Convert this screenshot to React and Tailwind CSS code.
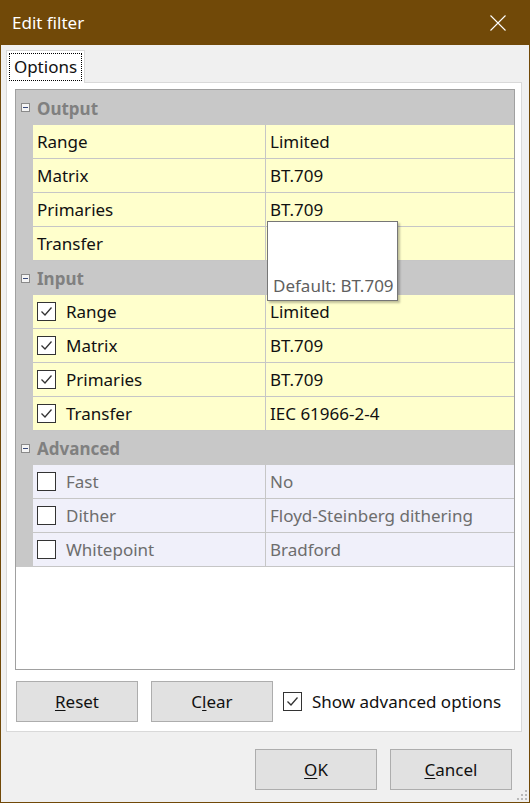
import React from 'react';

const font = "font-['Noto_Sans',_'Liberation_Sans',_sans-serif]";

function Check({ checked }) {
  return (
    <div className="w-[19px] h-[19px] border border-[#333333] bg-white flex items-center justify-center shrink-0">
      {checked ? (
        <svg width="15" height="15" viewBox="0 0 15 15">
          <path d="M2.5 7.5 L6 11 L12.5 3.5" fill="none" stroke="#333333" strokeWidth="1.3" />
        </svg>
      ) : null}
    </div>
  );
}

function Minus() {
  return (
    <svg width="9" height="9" viewBox="0 0 9 9" className="shrink-0">
      <rect x="0.5" y="0.5" width="8" height="8" fill="#f4f4f4" stroke="#8a8a8a" />
      <path d="M2 4.5 H7" stroke="#3a4a7a" strokeWidth="1" />
    </svg>
  );
}

function Header({ title, first }) {
  return (
    <div className={`${first ? 'h-[35px]' : 'h-[34px]'} bg-[#c8c8c8] flex items-center`}>
      <div className="w-[17px] flex justify-center pl-[2px]">
        <Minus />
      </div>
      <span className="ml-[4px] text-[17px] font-bold text-[#808080] leading-none pt-[1px]">{title}</span>
    </div>
  );
}

function Row({ name, value, check, disabled }) {
  const bg = disabled ? 'bg-[#f0f0fa]' : 'bg-[#ffffcc]';
  const color = disabled ? 'text-[#6d6d6d]' : 'text-[#111111]';
  return (
    <div className="h-[34px] flex">
      <div className="w-[17px] bg-[#c8c8c8]" />
      <div className={`w-[233px] ${bg} ${color} border-b border-r border-[#c6c6c6] flex items-center pl-[4px]`}>
        {check !== undefined ? (
          <>
            <Check checked={check} />
            <span className="ml-[10px]">{name}</span>
          </>
        ) : (
          <span>{name}</span>
        )}
      </div>
      <div className={`flex-1 ${bg} ${color} border-b border-[#c6c6c6] flex items-center pl-[4px]`}>
        {value}
      </div>
    </div>
  );
}

function Button({ children, className = '' }) {
  return (
    <div className={`w-[122px] h-[41px] bg-[#e1e1e1] border border-[#adadad] flex items-center justify-center text-[17px] text-[#111111] ${className}`}>
      {children}
    </div>
  );
}

export default function App() {
  return (
    <div className={`relative w-[530px] h-[803px] border border-[#714908] bg-[#f0f0f0] flex flex-col ${font} text-[17px]`}>
      {/* title bar */}
      <div className="h-[44px] bg-[#714908] flex items-center justify-between pl-[11px] pr-[23px] shrink-0">
        <span className="text-white text-[17px]">Edit filter</span>
        <svg width="16" height="16" viewBox="0 0 16 16">
          <path d="M0.5 0.5 L15.5 15.5 M15.5 0.5 L0.5 15.5" stroke="white" strokeWidth="1.1" />
        </svg>
      </div>

      <div className="flex-1 flex flex-col pl-[5px] pr-[7px] pt-[5px]">
        {/* tab strip */}
        <div className="flex">
          <div className="relative z-10 h-[33px] -mb-px w-[79px] bg-white border border-b-0 border-[#d9d9d9] p-[2px]">
            <div className="h-[28px] border border-dotted border-black flex items-center justify-center text-[17px] text-[#111111]">
              Options
            </div>
          </div>
        </div>

        {/* tab panel */}
        <div className="h-[650px] bg-white border border-[#d9d9d9] flex flex-col">
          <div className="ml-[8px] mr-[6px] mt-[6px] h-[581px] border border-[#a0a0a0] bg-white flex flex-col">
            <Header title="Output" first />
            <Row name="Range" value="Limited" />
            <Row name="Matrix" value="BT.709" />
            <Row name="Primaries" value="BT.709" />
            <Row name="Transfer" value="" />
            <Header title="Input" />
            <Row name="Range" value="Limited" check />
            <Row name="Matrix" value="BT.709" check />
            <Row name="Primaries" value="BT.709" check />
            <Row name="Transfer" value="IEC 61966-2-4" check />
            <Header title="Advanced" />
            <Row name="Fast" value="No" check={false} disabled />
            <Row name="Dither" value="Floyd-Steinberg dithering" check={false} disabled />
            <Row name="Whitepoint" value="Bradford" check={false} disabled />
          </div>

          <div className="flex items-center mt-[11px] ml-[9px]">
            <Button>
              <span><span className="underline underline-offset-2">R</span>eset</span>
            </Button>
            <Button className="ml-[13px]">
              <span>C<span className="underline underline-offset-2">l</span>ear</span>
            </Button>
            <div className="ml-[10px] flex items-center">
              <Check checked />
              <span className="ml-[10px] text-[#111111]">Show advanced options</span>
            </div>
          </div>
        </div>

        {/* dialog buttons */}
        <div className="flex justify-end mt-[17px] pr-[10px]">
          <Button>
            <span><span className="underline underline-offset-2">O</span>K</span>
          </Button>
          <Button className="ml-[13px]">
            <span><span className="underline underline-offset-2">C</span>ancel</span>
          </Button>
        </div>
      </div>

      {/* size grip */}
      <svg className="absolute right-[1px] bottom-[1px]" width="12" height="12" viewBox="0 0 12 12">
        <g fill="#b8b8b8">
          <rect x="9" y="1" width="2" height="2" />
          <rect x="5" y="5" width="2" height="2" />
          <rect x="9" y="5" width="2" height="2" />
          <rect x="1" y="9" width="2" height="2" />
          <rect x="5" y="9" width="2" height="2" />
          <rect x="9" y="9" width="2" height="2" />
        </g>
      </svg>

      {/* tooltip */}
      <div className="absolute left-[266px] top-[220px] w-[131px] h-[80px] bg-white border border-[#767676] shadow-[2px_2px_2px_rgba(0,0,0,0.25)] flex items-end pl-[5px] pb-[2px] z-20">
        <span className="text-[17px] text-[#5f5f5f]">Default: BT.709</span>
      </div>
    </div>
  );
}
